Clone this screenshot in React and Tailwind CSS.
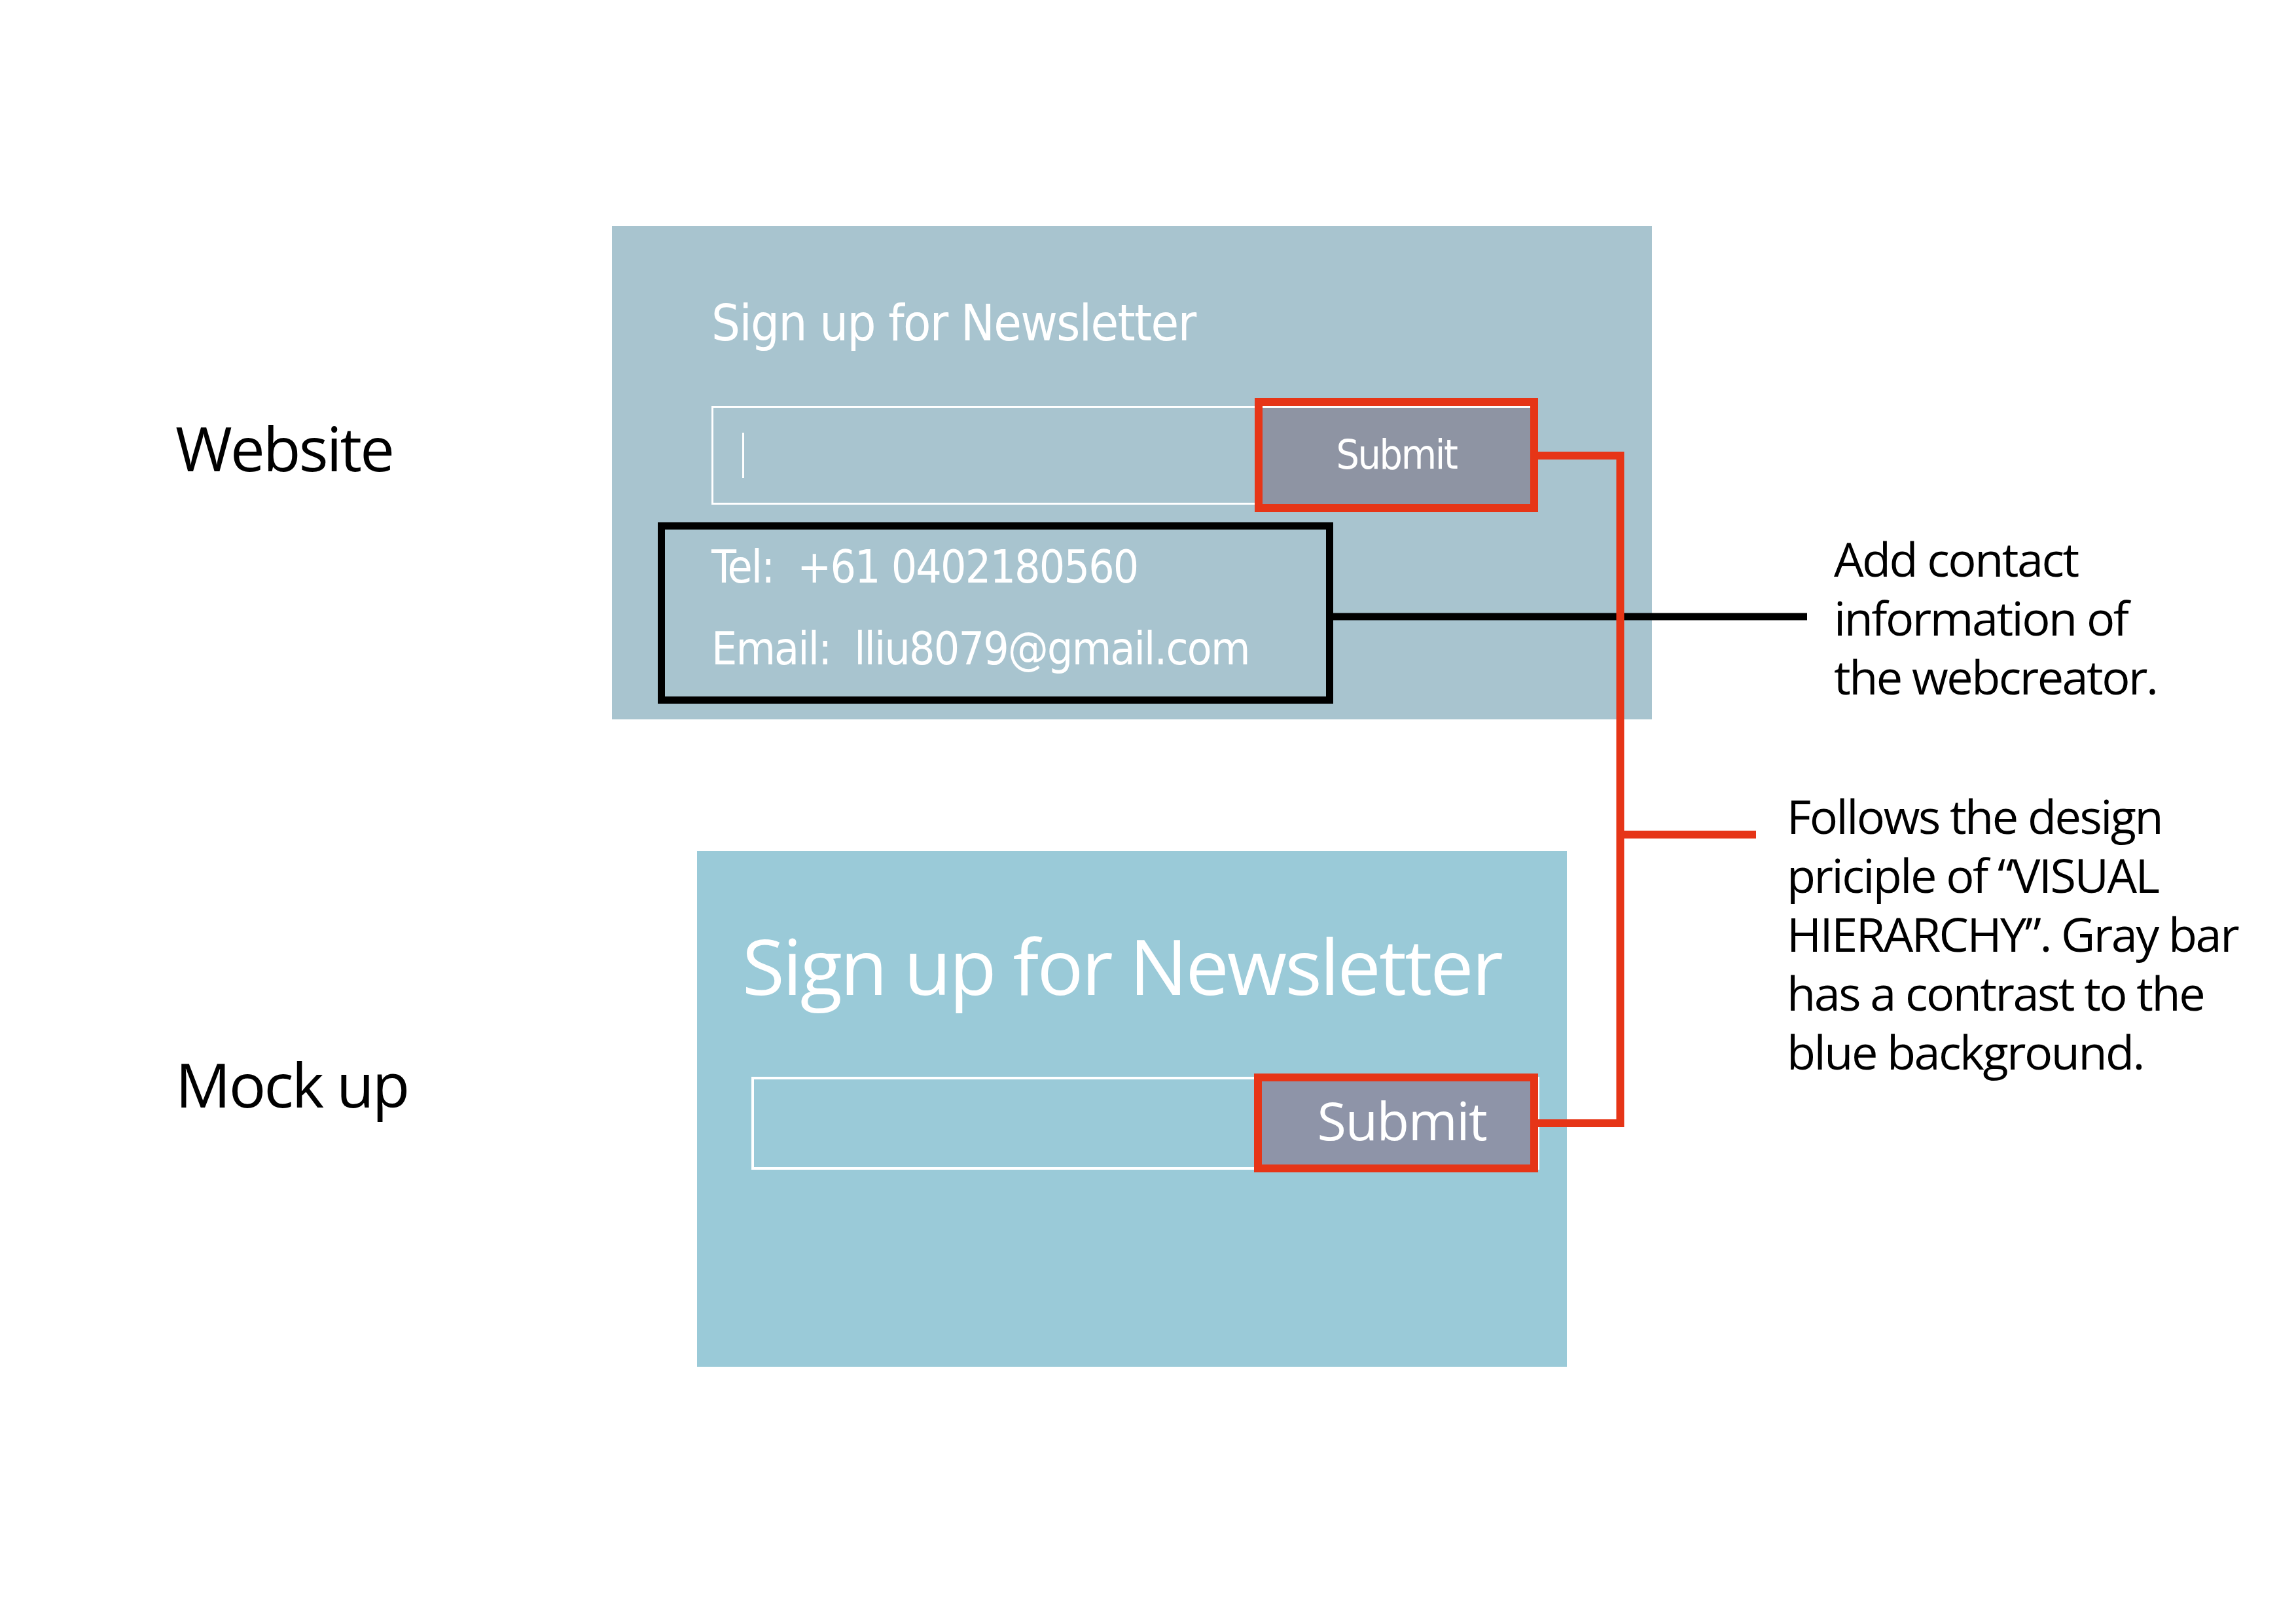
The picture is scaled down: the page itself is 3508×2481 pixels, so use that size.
export default function App() {
  const tahoma = { fontFamily: '"DejaVu Sans Condensed", "DejaVu Sans", sans-serif' };
  const myriad = { fontFamily: '"Open Sans", "Noto Sans", sans-serif' };
  return (
    <div className="relative w-[3508px] h-[2481px] bg-white overflow-hidden flex items-start text-black">
      {/* Left labels */}
      <div className="ml-[268px] w-[667px] flex flex-col pt-[637px] tracking-[-2.8px]" style={myriad}>
        <div className="text-[94px] leading-none whitespace-nowrap">Website</div>
        <div className="text-[94px] leading-none whitespace-nowrap mt-[878px]">Mock up</div>
      </div>

      {/* Panels */}
      <div className="w-[1589px] flex flex-col pt-[345px]">
        {/* Website panel */}
        <div className="w-[1589px] h-[754px] bg-[#a8c4cf] flex flex-col pt-[110px] text-white [font-stretch:condensed]" style={tahoma}>
          <div className="ml-[152px] text-[77px] leading-none whitespace-nowrap tracking-[-1.6px]">Sign up for Newsletter</div>
          <div className="mt-[76px] ml-[152px] h-[174px] flex items-center">
            <div className="w-[1251px] h-[151px] border-[3px] border-white flex items-center">
              <div className="ml-[44px] w-[3px] h-[69px] bg-white" />
            </div>
            <div className="ml-[-421px] w-[433px] h-[174px] border-[12px] border-[#e63517] bg-[#8e94a3] shadow-[inset_0_3px_0_#ffffff] flex items-center justify-center text-[62px] leading-none tracking-[-2.3px]">
              Submit
            </div>
          </div>
          <div className="mt-[16px] ml-[70px] w-[1032px] h-[277px] border-[11px] border-black flex flex-col pl-[71px] pt-[23px] gap-[56px] text-[69px] leading-none tracking-[-1.8px]">
            <div className="whitespace-nowrap">Tel:&nbsp;&nbsp;+61 0402180560</div>
            <div className="whitespace-nowrap">Email:&nbsp;&nbsp;lliu8079@gmail.com</div>
          </div>
        </div>

        {/* Mock up panel */}
        <div className="mt-[201px] ml-[130px] w-[1329px] h-[788px] bg-[#9acad8] flex flex-col pt-[116px] text-white" style={myriad}>
          <div className="ml-[69px] text-[118px] leading-none whitespace-nowrap tracking-[-2.9px]">Sign up for Newsletter</div>
          <div className="mt-[106px] ml-[83px] h-[151px] flex items-center">
            <div className="w-[1204px] h-[142px] border-[4px] border-white" />
            <div className="ml-[-436px] w-[434px] h-[151px] border-[12px] border-[#e63517] bg-[#8e94a8] flex items-center justify-center pl-[18px] pb-[10px] text-[81px] leading-none tracking-[-1.5px]">
              Submit
            </div>
          </div>
        </div>
      </div>

      {/* Annotations */}
      <div className="ml-[206px] flex flex-col pt-[808px] text-[72px] leading-[90px] tracking-[-2.5px]" style={myriad}>
        <div className="ml-[72px] whitespace-nowrap">
          <div>Add contact</div>
          <div>information of</div>
          <div>the webcreator.</div>
        </div>
        <div className="mt-[123px] whitespace-nowrap">
          <div>Follows the design</div>
          <div>priciple of “VISUAL</div>
          <div>HIERARCHY”. Gray bar</div>
          <div>has a contrast to the</div>
          <div>blue background.</div>
        </div>
      </div>

      {/* Connector lines */}
      <svg className="absolute inset-0 pointer-events-none" width="3508" height="2481" viewBox="0 0 3508 2481">
        <line x1="2037" y1="942" x2="2761" y2="942" stroke="#000" strokeWidth="11" />
        <polyline points="2350,696 2475.5,696 2475.5,1716 2350,1716" fill="none" stroke="#e63517" strokeWidth="12" />
        <line x1="2475.5" y1="1275" x2="2683" y2="1275" stroke="#e63517" strokeWidth="12" />
      </svg>
    </div>
  );
}
